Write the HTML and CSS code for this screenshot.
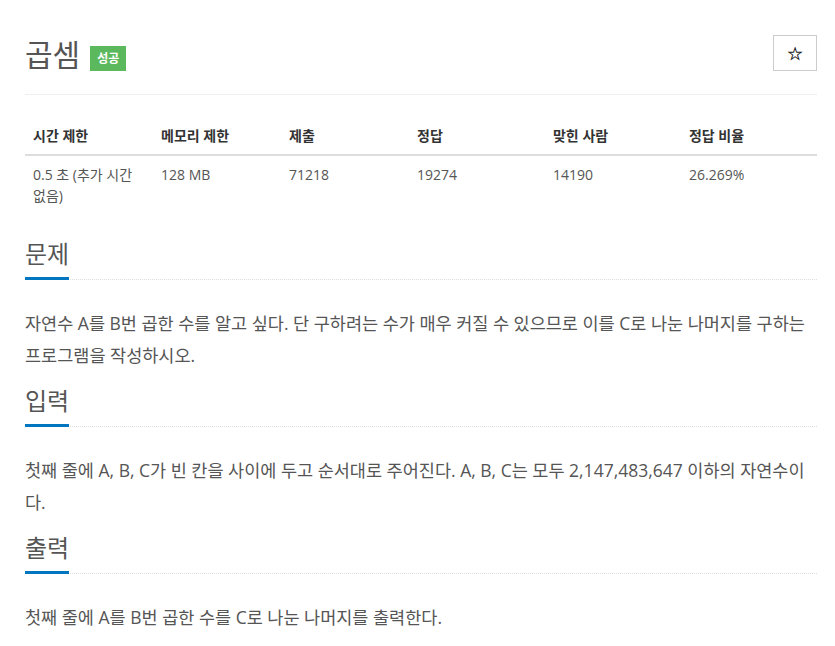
FILE: index.html
```html
<!DOCTYPE html>
<html lang="ko">
<head>
  <meta charset="UTF-8" />
  <meta name="viewport" content="width=device-width, initial-scale=1.0" />
  <title>곱셈</title>
  <link rel="stylesheet" href="styles.css">
</head>
<body>
  <div class="page">
    <header class="problem-header">
      <h1 class="problem-title">곱셈 <span class="badge">성공</span></h1>
      <button class="star-btn" type="button">☆</button>
    </header>

    <table class="problem-info">
      <thead>
        <tr>
          <th class="col-sm">시간 제한</th>
          <th class="col-sm">메모리 제한</th>
          <th class="col-sm">제출</th>
          <th class="col-lg">정답</th>
          <th class="col-lg">맞힌 사람</th>
          <th class="col-lg">정답 비율</th>
        </tr>
      </thead>
      <tbody>
        <tr>
          <td>0.5 초 (추가 시간 없음)</td>
          <td>128 MB</td>
          <td>71218</td>
          <td>19274</td>
          <td>14190</td>
          <td>26.269%</td>
        </tr>
      </tbody>
    </table>

    <section class="problem-section">
      <div class="headline"><h2>문제</h2></div>
      <p>자연수 A를 B번 곱한 수를 알고 싶다. 단 구하려는 수가 매우 커질 수 있으므로 이를 C로 나눈 나머지를 구하는 프로그램을 작성하시오.</p>
    </section>

    <section class="problem-section">
      <div class="headline"><h2>입력</h2></div>
      <p>첫째 줄에 A, B, C가 빈 칸을 사이에 두고 순서대로 주어진다. A, B, C는 모두 2,147,483,647 이하의 자연수이다.</p>
    </section>

    <section class="problem-section">
      <div class="headline"><h2>출력</h2></div>
      <p>첫째 줄에 A를 B번 곱한 수를 C로 나눈 나머지를 출력한다.</p>
    </section>
  </div>
</body>
</html>
```

FILE: styles.css
```css
* {
  margin: 0;
  padding: 0;
  box-sizing: border-box;
}

body {
  font-family: "Open Sans", "Noto Sans CJK KR", sans-serif;
  color: #555;
  background: #fff;
}

.page {
  width: 792px;
  margin-left: 25px;
  padding-top: 35px;
}

.problem-header {
  display: flex;
  justify-content: space-between;
  align-items: flex-start;
  padding-bottom: 19px;
  border-bottom: 1px solid #eee;
}

.problem-title {
  font-size: 30px;
  font-weight: 400;
  line-height: 40px;
  color: #555;
  display: flex;
  align-items: center;
}

.badge {
  display: inline-block;
  margin-left: 10px;
  margin-top: 6px;
  background: #5cb85c;
  color: #fff;
  font-size: 12px;
  font-weight: 700;
  line-height: 25px;
  padding: 0 7px;
}

.star-btn {
  width: 44px;
  height: 36px;
  border: 1px solid #ccc;
  background: #fff;
  font-size: 18px;
  color: #111;
  font-family: "DejaVu Sans", sans-serif;
  -webkit-text-stroke: 0.3px #111;
}

.problem-info {
  width: 100%;
  border-collapse: collapse;
  margin-top: 23px;
  font-size: 14px;
}

.problem-info th {
  text-align: left;
  font-weight: 700;
  color: #333;
  padding: 8px;
  line-height: 20px;
  border-bottom: 2px solid #ddd;
}

.col-sm {
  width: 16%;
}

.col-lg {
  width: 17%;
}

.problem-info td {
  vertical-align: top;
  padding: 8px;
  line-height: 21px;
  color: #555;
  word-break: keep-all;
}

.problem-section {
  margin-top: 14px;
}

.problem-info + .problem-section {
  margin-top: 24px;
}

.headline {
  border-bottom: 1px dotted #ddd;
}

.headline h2 {
  display: inline-block;
  font-size: 24px;
  font-weight: 400;
  line-height: 32px;
  color: #555;
  padding-bottom: 7px;
  border-bottom: 3px solid #0076c0;
  margin-bottom: -1px;
}

.problem-section p {
  font-size: 17.5px;
  line-height: 32px;
  color: #555;
  margin-top: 27px;
}
```
